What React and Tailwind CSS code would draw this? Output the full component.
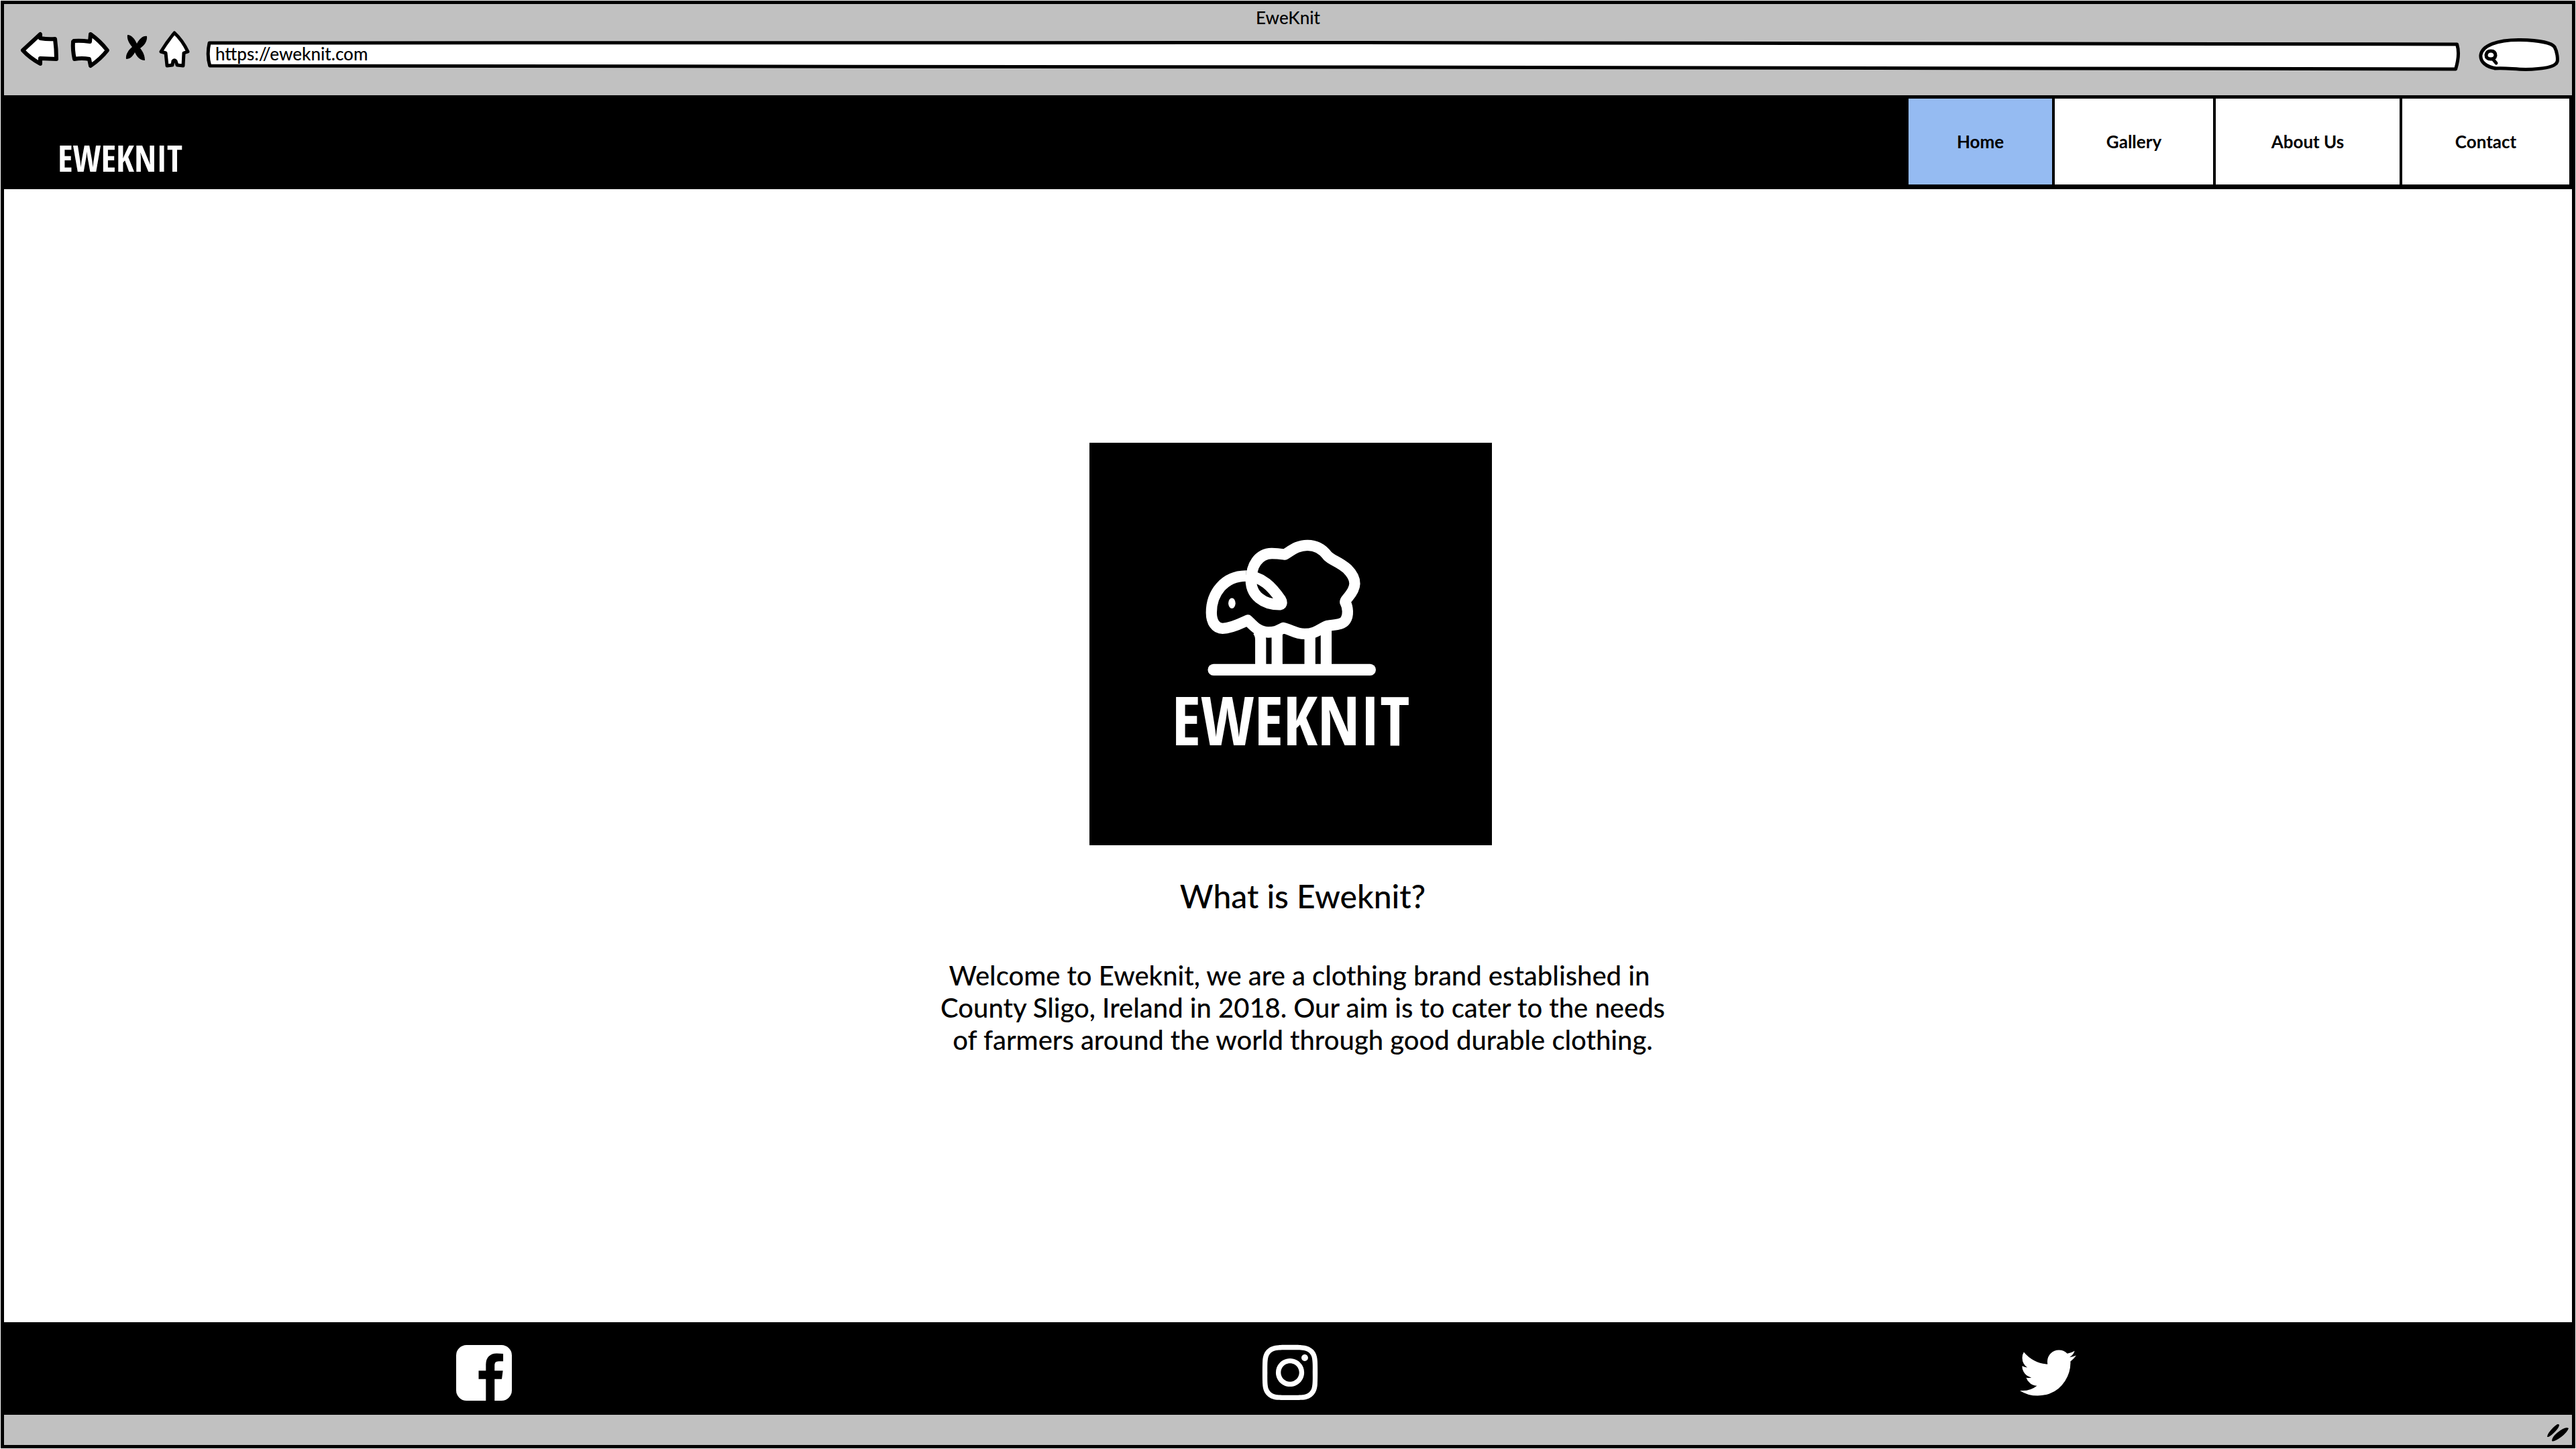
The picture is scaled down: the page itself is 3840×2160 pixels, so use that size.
import React from "react";
import { FaInstagram } from "react-icons/fa";

const navItems = [
  { label: "Home", width: "w-[214px]", active: true },
  { label: "Gallery", width: "w-[236px]" },
  { label: "About Us", width: "w-[274px]" },
  { label: "Contact", width: "w-[249px]" },
];

const outline = {
  fill: "white",
  stroke: "black",
  strokeWidth: 6,
  strokeLinejoin: "round",
  strokeLinecap: "round",
};

function ToolButton({ label, width, viewBox, children }) {
  return (
    <button type="button" aria-label={label} className={`h-[60px] shrink-0 ${width}`}>
      <svg viewBox={viewBox} className="h-full w-full" aria-hidden="true">
        {children}
      </svg>
    </button>
  );
}

function BrowserBar() {
  return (
    <div className="bg-[#c1c1c1] pt-1 pb-[35px]">
      <p className="text-center text-[26px] leading-8">EweKnit</p>
      <div className="mt-[3px] flex items-start gap-3 pr-[18px] pl-6">
        <ToolButton label="Back" width="w-[62px]" viewBox="30 45 62 60">
          <path {...outline} d="M34 75 60 51 60 57Q72 59 82 58 84 73 84 88L60 87 60 95Q44 86 34 75Z" />
        </ToolButton>
        <ToolButton label="Forward" width="w-[62px]" viewBox="104 45 62 60">
          <path {...outline} d="M110 61Q120 60 134 62L135 51Q149 61 160 75 150 88 135 98L133 88Q122 86 111 88 108 74 109 62Z" />
        </ToolButton>
        <ToolButton label="Stop" width="w-[46px]" viewBox="178 45 46 60">
          <path d="M190 52C196 52 201 58 204 65C208 58 213 53 219 54C220 61 215 68 209 72C214 78 216 84 216 90C208 90 204 84 201 78C198 84 194 88 188 88C187 81 192 74 197 70C192 64 189 58 190 52Z" />
        </ToolButton>
        <ToolButton label="Home page" width="w-[52px]" viewBox="236 45 52 60">
          <path
            {...outline}
            strokeWidth="5"
            d="M260 49Q249 62 240 77L247 79 249 98 257 97 258 91Q260 89 262 91L264 97 273 98 274 79 280 77Q272 60 260 49Z"
          />
        </ToolButton>
        <div className="relative mt-4 mr-3 ml-2 h-[46px] flex-1">
          <svg
            viewBox="0 0 1000 46"
            preserveAspectRatio="none"
            className="absolute inset-0 h-full w-full overflow-visible"
            aria-hidden="true"
          >
            <path
              {...outline}
              strokeWidth="5"
              vectorEffect="non-scaling-stroke"
              d="M1.2 3L500 2.5 998.4 5Q999.8 20 997.8 42L500 39 1.4 37Q0 21 1.2 3Z"
            />
          </svg>
          <input
            type="text"
            aria-label="Address"
            defaultValue="https://eweknit.com"
            className="relative h-[38px] w-full bg-transparent px-[13px] text-[26px] outline-none"
          />
        </div>
        <div className="relative mt-[10px] h-[52px] w-[124px] shrink-0">
          <svg viewBox="3692 55 124 52" className="absolute inset-0 h-full w-full" aria-hidden="true">
            <path
              {...outline}
              strokeWidth="5"
              d="M3721 102C3706 100 3697 92 3698 82C3700 68 3722 59 3757 59.500C3785 60 3804 64 3808 70C3812 77 3813 88 3812 92C3810 99 3795 103 3765 103.500C3745 103 3735 101 3719 102"
            />
            <path fill="none" stroke="black" strokeWidth="5" strokeLinecap="round" d="M3706 82Q3707 76 3713 76 3720 76 3720 83 3719 88 3713 88 3706 88 3706 82ZM3716 88 3721 94" />
          </svg>
          <input
            type="search"
            aria-label="Search"
            className="relative h-full w-full bg-transparent pr-4 pl-9 text-[26px] outline-none"
          />
        </div>
      </div>
    </div>
  );
}

function Sheep() {
  return (
    <svg viewBox="480 400 630 505" className="h-[206px] w-[257px]" role="img" aria-label="Sheep">
      <g fill="none" stroke="white" strokeWidth="40" strokeLinejoin="round">
        <path d="M652 550C647 500 676 455 725 454C745 454 758 456 772 458C795 445 815 424 855 424C890 424 912 440 928 462C945 480 968 482 1000 510C1040 550 1033 580 1003 615C998 621 992 626 993 632C1003 650 1006 680 994 698C982 716 955 714 930 718C905 724 890 748 845 748C810 748 795 732 767 726C745 738 735 742 712 742C675 742 655 715 637 698C620 705 580 728 545 728C520 728 504 705 504 670C504 600 550 537 630 536" />
        <path d="M630 536C690 536 728 580 757 622C762 630 763 640 755 641C700 642 642 612 649 536" />
        <path d="M672 735Q684 748 684 770V870M744 735V870M864 735V870M923.500 720V870" />
      </g>
      <rect x="491" y="858" width="614" height="42" rx="21" fill="white" />
      <ellipse cx="579" cy="636" rx="13" ry="19" fill="white" />
    </svg>
  );
}

function FacebookIcon() {
  return (
    <svg viewBox="0 128 1536 1536" className="h-[83px] w-[83px]" fill="currentColor" aria-hidden="true">
      <path d="M1248 128q119 0 203.500 84.500t84.500 203.500v960q0 119-84.500 203.500t-203.500 84.500h-188v-595h199l30-232h-229v-148q0-56 23.500-84t91.500-28l122-1v-207q-63-9-178-9-136 0-217.500 80t-81.500 226v171h-200v232h200v595h-532q-119 0-203.500-84.500t-84.500-203.500v-960q0-119 84.500-203.500t203.500-84.500h960z" />
    </svg>
  );
}

function TwitterIcon() {
  return (
    <svg viewBox="108 256 1576 1280" className="h-[69px] w-[84px]" fill="currentColor" aria-hidden="true">
      <path d="M1684 408q-67 98-162 167 1 14 1 42 0 130-38 259.500t-115.500 248.500-184.500 210.500-258 146-323 54.500q-271 0-496-145 35 4 78 4 225 0 401-138-105-2-188-64.500t-114-159.500q33 5 61 5 43 0 85-11-112-23-185.500-111.500t-73.500-205.500v-4q68 38 146 41-66-44-105-115t-39-154q0-88 44-163 121 149 294.500 238.500t371.500 99.500q-8-38-8-74 0-134 94.500-228.500t228.500-94.500q140 0 236 102 109-21 205-78-37 115-142 178 93-10 186-50z" />
    </svg>
  );
}

export default function App() {
  return (
    <div className="flex min-h-screen bg-white p-px font-['Lato_Medium','Lato',sans-serif] text-black">
      <div className="flex flex-1 flex-col border-5 border-black">
        <BrowserBar />

        <header className="flex items-stretch justify-between bg-black pt-[5px] pr-1 pb-[7px]">
          <a
            href="#home"
            className="mt-[55px] ml-[80px] font-['Open_Sans_Condensed','Roboto_Condensed',sans-serif] text-[53px] leading-[68px] font-bold text-white"
          >
            EWEKNIT
          </a>
          <nav aria-label="Main" className="flex h-[128px] gap-1">
            {navItems.map((item) => (
              <a
                key={item.label}
                href={`#${item.label.toLowerCase().replace(" ", "-")}`}
                aria-current={item.active ? "page" : undefined}
                className={`flex items-center justify-center font-[Lato] text-[26px] leading-8 font-bold ${item.width} ${
                  item.active ? "bg-[#95bbf2]" : "bg-white"
                }`}
              >
                {item.label}
              </a>
            ))}
          </nav>
        </header>

        <main className="flex flex-1 flex-col items-center justify-center pb-5 pl-2">
          <div className="flex h-[600px] w-[600px] flex-col items-center bg-black pt-[143px] text-white">
            <Sheep />
            <span className="font-['Open_Sans_Condensed','Roboto_Condensed',sans-serif] text-[101px] leading-[126px] font-bold">
              EWEKNIT
            </span>
          </div>
          <section className="pl-9 text-center">
            <h1 className="mt-12 text-[48px] leading-14">What is Eweknit?</h1>
            <p className="mt-[66px] text-[40px] leading-12">
              Welcome to Eweknit, we are a clothing brand established in{"\u00a0"}
              <br />
              County Sligo, Ireland in 2018. Our aim is to cater to the needs
              <br />
              of farmers around the world through good durable clothing.
            </p>
          </section>
        </main>

        <footer>
          <div className="grid h-[138px] grid-cols-[1432fr_972fr_1288fr] items-center justify-items-center bg-black pt-3 pr-[137px] text-white">
            <a href="#facebook" aria-label="Facebook">
              <FacebookIcon />
            </a>
            <a href="#instagram" aria-label="Instagram">
              <FaInstagram className="h-[94px] w-[94px]" />
            </a>
            <a href="#twitter" aria-label="Twitter">
              <TwitterIcon />
            </a>
          </div>
          <div className="flex h-[45px] items-center justify-end bg-[#c1c1c1] pt-2 pr-1">
            <svg viewBox="3796 2121 34 28" className="h-7 w-[34px]" aria-hidden="true">
              <path d="M3797 2141Q3797 2136 3806 2127 3813 2120 3815 2123 3815 2127 3808 2134 3800 2142 3797 2141ZM3804 2147Q3804 2141 3813 2134 3824 2125 3829 2128 3827 2134 3818 2141 3807 2149 3804 2147Z" />
            </svg>
          </div>
        </footer>
      </div>
    </div>
  );
}
